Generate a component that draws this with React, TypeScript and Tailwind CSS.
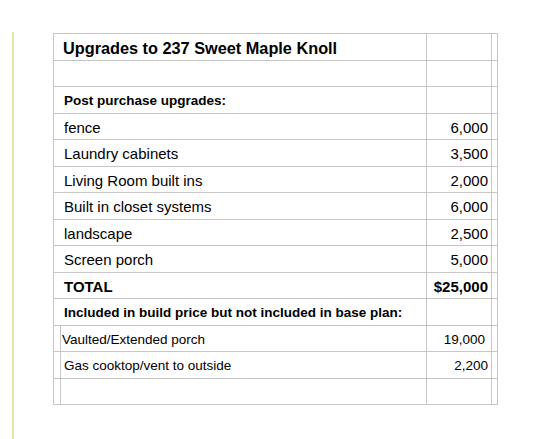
const rows: { label: string; value?: string; kind: 'title' | 'blank' | 'head' | 'item' | 'total' }[] = [
  { label: 'Upgrades to 237 Sweet Maple Knoll', kind: 'title' },
  { label: '', kind: 'blank' },
  { label: 'Post purchase upgrades:', kind: 'head' },
  { label: 'fence', value: '6,000', kind: 'item' },
  { label: 'Laundry cabinets', value: '3,500', kind: 'item' },
  { label: 'Living Room built ins', value: '2,000', kind: 'item' },
  { label: 'Built in closet systems', value: '6,000', kind: 'item' },
  { label: 'landscape', value: '2,500', kind: 'item' },
  { label: 'Screen porch', value: '5,000', kind: 'item' },
  { label: 'TOTAL', value: '$25,000', kind: 'total' },
  { label: 'Included in build price but not included in base plan:', kind: 'head' },
];

const extras = [
  { label: 'Vaulted/Extended porch', value: '19,000', pl: 'pl-[1px]', pr: 'pr-[6px]' },
  { label: 'Gas cooktop/vent to outside', value: '2,200', pl: 'pl-[3px]', pr: 'pr-[3px]' },
  { label: '', value: '', pl: '', pr: '' },
];

const cell = 'border border-[#c6c6c6] h-[26.5px] p-0 align-middle';

export default function App() {
  return (
    <div className="flex h-[439px] w-[537px] bg-white pl-[12px] font-['Liberation_Sans',Arial,sans-serif] text-black">
      <div className="mt-[32px] w-[2px] bg-[#e2e2ad]" />
      <div className="ml-[39px] mt-[33px]">
        <table className="border-collapse">
          <colgroup>
            <col className="w-[7px]" />
            <col className="w-[366px]" />
            <col className="w-[65px]" />
            <col className="w-[6px]" />
          </colgroup>
          <tbody>
            {rows.map((r, i) => (
              <tr key={i}>
                <td colSpan={2} className={cell}>
                  {r.kind === 'title' && <div className="pl-[9px] pt-[3px] text-[16.3px] font-bold leading-none">{r.label}</div>}
                  {r.kind === 'head' && <div className="pl-[10px] pt-[2px] text-[13.5px] font-bold leading-none">{r.label}</div>}
                  {r.kind === 'item' && <div className="pl-[10px] pt-[2px] text-[15px] leading-none">{r.label}</div>}
                  {r.kind === 'total' && <div className="pl-[10px] pt-[2px] text-[15px] font-bold leading-none">{r.label}</div>}
                </td>
                <td className={cell}>
                  {r.value && (
                    <div className={`pr-[3px] pt-[2px] text-right text-[15px] leading-none ${r.kind === 'total' ? 'font-bold' : ''}`}>
                      {r.value}
                    </div>
                  )}
                </td>
                <td className={cell} />
              </tr>
            ))}
            {extras.map((e, i) => (
              <tr key={'x' + i}>
                <td className={cell} />
                <td className={cell}>
                  <div className={`${e.pl} pt-[2px] text-[13.5px] leading-none`}>{e.label}</div>
                </td>
                <td className={cell}>
                  <div className={`${e.pr} pt-[2px] text-right text-[13.5px] leading-none`}>{e.value}</div>
                </td>
                <td className={cell} />
              </tr>
            ))}
          </tbody>
        </table>
      </div>
    </div>
  );
}
